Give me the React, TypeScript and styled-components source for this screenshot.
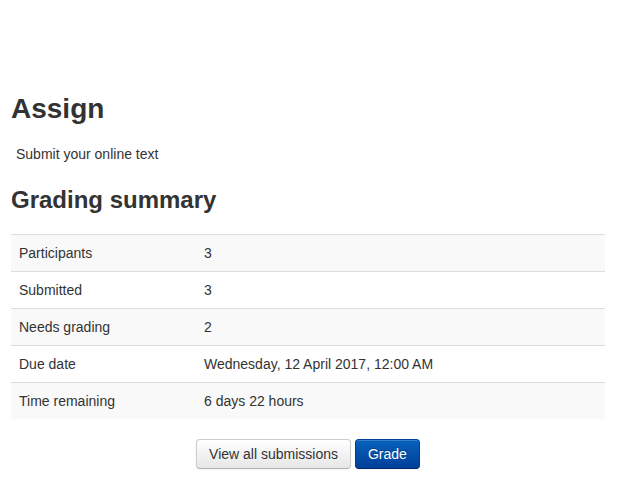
import React from "react"
import styled, { createGlobalStyle, css } from "styled-components"

const GlobalStyle = createGlobalStyle`
  body {
    margin: 0;
    background: #fff;
    color: #333;
    font-family: "Liberation Sans", Arial, Helvetica, sans-serif;
    font-size: 14px;
    line-height: 20px;
  }
`

const Page = styled.div`
  padding: 89px 13px 20px 11px;
`

const Heading = styled.h2`
  margin: 0;
  font-size: 28px;
  line-height: 40px;
  font-weight: bold;
  color: #333;
`

const Intro = styled.div`
  margin-top: 15px;
  padding-left: 5px;
`

const SubHeading = styled.h3`
  margin: 21px 0 0;
  font-size: 24px;
  line-height: 30px;
  font-weight: bold;
  color: #333;
`

const SummaryTable = styled.table`
  margin-top: 19px;
  width: 100%;
  border-collapse: collapse;
  border-spacing: 0;
`

const Row = styled.tr<{ striped?: boolean }>`
  ${({ striped }) =>
    striped &&
    css`
      background: #f9f9f9;
    `}
`

const Cell = styled.td<{ label?: boolean }>`
  padding: 8px;
  line-height: 20px;
  text-align: left;
  vertical-align: top;
  border-top: 1px solid #ddd;
  ${({ label }) =>
    label &&
    css`
      width: 169px;
    `}
`

const Actions = styled.div`
  margin-top: 20px;
  display: flex;
  justify-content: center;
  gap: 4px;
`

const Button = styled.button<{ primary?: boolean }>`
  font-family: inherit;
  font-size: 14px;
  line-height: 20px;
  padding: 4px 12px;
  border-radius: 4px;
  cursor: pointer;
  color: #333;
  background-color: #f5f5f5;
  background-image: linear-gradient(to bottom, #ffffff, #e6e6e6);
  border: 1px solid #cccccc;
  border-bottom-color: #b3b3b3;
  box-shadow: inset 0 1px 0 rgba(255, 255, 255, 0.2),
    0 1px 2px rgba(0, 0, 0, 0.05);

  ${({ primary }) =>
    primary &&
    css`
      color: #fff;
      background-color: #0050aa;
      background-image: linear-gradient(to bottom, #0762bd, #003f98);
      border-color: #003f98 #003f98 #002a66;
      text-shadow: 0 -1px 0 rgba(0, 0, 0, 0.25);
    `}
`

const rows: [string, string][] = [
  ["Participants", "3"],
  ["Submitted", "3"],
  ["Needs grading", "2"],
  ["Due date", "Wednesday, 12 April 2017, 12:00 AM"],
  ["Time remaining", "6 days 22 hours"],
]

const App = (): JSX.Element => {
  return (
    <Page>
      <GlobalStyle />
      <Heading>Assign</Heading>
      <Intro>Submit your online text</Intro>
      <SubHeading>Grading summary</SubHeading>
      <SummaryTable>
        <tbody>
          {rows.map(([label, value], i) => (
            <Row key={label} striped={i % 2 === 0}>
              <Cell label>{label}</Cell>
              <Cell>{value}</Cell>
            </Row>
          ))}
        </tbody>
      </SummaryTable>
      <Actions>
        <Button>View all submissions</Button>
        <Button primary>Grade</Button>
      </Actions>
    </Page>
  )
}

export default App
